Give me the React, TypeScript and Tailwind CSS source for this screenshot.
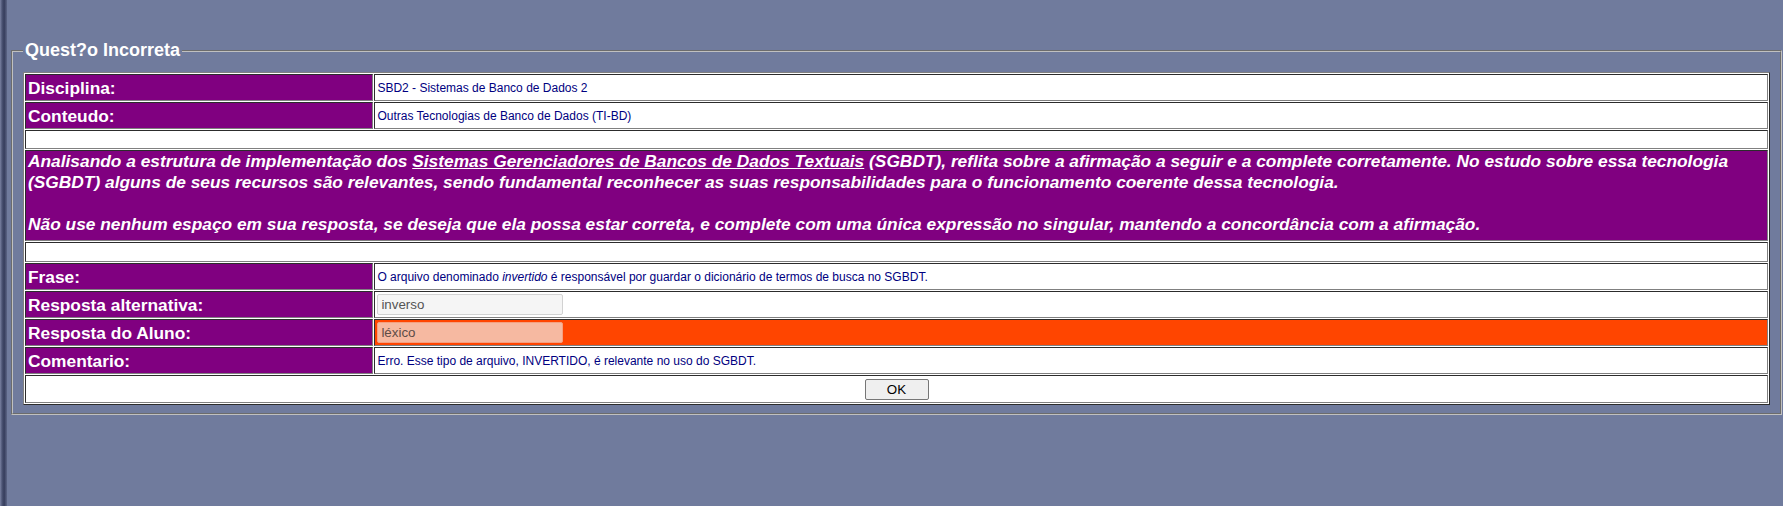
import React from "react";

function LabelCell({ children }: { children: React.ReactNode }) {
  return (
    <td className="w-[20%] h-[27px] border border-[#808080] [--tw-border-style:inset] bg-[#800080] px-[2px] py-0 align-middle text-[13pt] font-bold leading-[20px] text-white">
      {children}
    </td>
  );
}

function ValueCell({ children, orange }: { children: React.ReactNode; orange?: boolean }) {
  return (
    <td
      className={
        orange
          ? "h-[27px] border border-[#808080] [--tw-border-style:inset] bg-[#ff4500] px-[2px] py-0 align-middle text-[12px] leading-[14px] text-[#000080]"
          : "h-[27px] border border-[#808080] [--tw-border-style:inset] bg-white px-[2px] py-0 align-middle text-[12px] leading-[14px] text-[#000080]"
      }
    >
      {children}
    </td>
  );
}

function EmptyRow({ h }: { h: string }) {
  return (
    <tr>
      <td
        colSpan={2}
        className={
          h === "19"
            ? "h-[19px] border border-[#808080] [--tw-border-style:inset] bg-white p-0"
            : "h-[20px] border border-[#808080] [--tw-border-style:inset] bg-white p-0"
        }
      />
    </tr>
  );
}

export default function App() {
  return (
    <div className="flex min-h-[506px] w-full bg-[#707b9d] font-['Liberation_Sans',Arial,sans-serif]">
      <div className="w-[7px] shrink-0 bg-[linear-gradient(to_right,#7a82a2,#4b5373_30%,#363d5c_60%,#5d6686)]" />
      <div className="flex-1 pl-[4px] pr-[1px] pt-[40px]">
        <fieldset className="border-2 border-[#c0c0c0] [--tw-border-style:groove] px-[10px] pt-[11px] pb-[8px]">
          <legend className="px-[2px] text-[18px] font-bold leading-[21px] text-white">
            Quest?o Incorreta
          </legend>
          <table className="w-full border-separate border-spacing-[1px] border border-[#808080] [--tw-border-style:outset] bg-white">
            <tbody>
              <tr>
                <LabelCell>Disciplina:</LabelCell>
                <ValueCell>SBD2 - Sistemas de Banco de Dados 2</ValueCell>
              </tr>
              <tr>
                <LabelCell>Conteudo:</LabelCell>
                <ValueCell>Outras Tecnologias de Banco de Dados (TI-BD)</ValueCell>
              </tr>
              <EmptyRow h="19" />
              <tr>
                <td
                  colSpan={2}
                  className="h-[91px] border border-[#808080] [--tw-border-style:inset] bg-[#800080] px-[2px] pt-0 pb-[4px] align-top text-[13pt] font-bold italic leading-[21px] text-white"
                >
                  Analisando a estrutura de implementação dos{" "}
                  <span className="underline">Sistemas Gerenciadores de Bancos de Dados Textuais</span>{" "}
                  (SGBDT), reflita sobre a afirmação a seguir e a complete corretamente. No estudo sobre essa
                  tecnologia (SGBDT) alguns de seus recursos são relevantes, sendo fundamental reconhecer as suas
                  responsabilidades para o funcionamento coerente dessa tecnologia.
                  <br />
                  <br />
                  Não use nenhum espaço em sua resposta, se deseja que ela possa estar correta, e complete com uma
                  única expressão no singular, mantendo a concordância com a afirmação.
                </td>
              </tr>
              <EmptyRow h="20" />
              <tr>
                <LabelCell>Frase:</LabelCell>
                <ValueCell>
                  O arquivo denominado <i>invertido</i> é responsável por guardar o dicionário de termos de busca no
                  SGBDT.
                </ValueCell>
              </tr>
              <tr>
                <LabelCell>Resposta alternativa:</LabelCell>
                <ValueCell>
                  <input
                    type="text"
                    readOnly
                    value="inverso"
                    className="block h-[21px] w-[186px] rounded-[2px] border border-[#d2d2d2] bg-[#f5f5f5] px-[3px] text-[13.33px] text-[#545454] outline-none"
                  />
                </ValueCell>
              </tr>
              <tr>
                <LabelCell>Resposta do Aluno:</LabelCell>
                <ValueCell orange>
                  <input
                    type="text"
                    readOnly
                    value="léxico"
                    className="block h-[21px] w-[186px] rounded-[2px] border border-[#f5a080] bg-[#f6b9a1] px-[3px] text-[13.33px] text-[#5e4d47] outline-none"
                  />
                </ValueCell>
              </tr>
              <tr>
                <LabelCell>Comentario:</LabelCell>
                <ValueCell>Erro. Esse tipo de arquivo, INVERTIDO, é relevante no uso do SGBDT.</ValueCell>
              </tr>
              <tr>
                <td
                  colSpan={2}
                  className="h-[28px] border border-[#808080] [--tw-border-style:inset] bg-white p-0 text-center align-middle"
                >
                  <button
                    type="button"
                    className="inline-block h-[21px] w-[64px] rounded-[2px] border border-[#767676] bg-[#efefef] align-middle text-[13.33px] leading-[19px] text-black"
                  >
                    OK
                  </button>
                </td>
              </tr>
            </tbody>
          </table>
        </fieldset>
      </div>
    </div>
  );
}
